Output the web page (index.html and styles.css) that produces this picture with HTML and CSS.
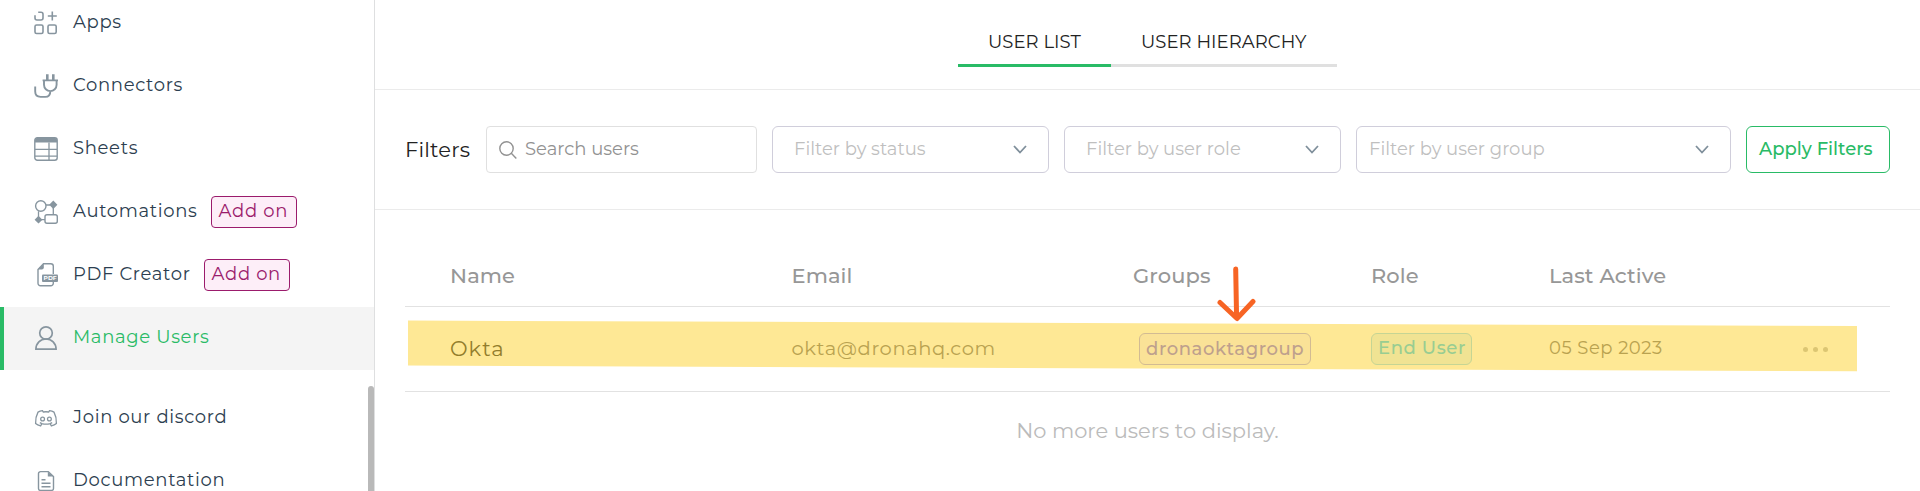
FILE: index.html
```html
<!DOCTYPE html>
<html lang="en">
<head>
<meta charset="utf-8">
<title>Manage Users</title>
<link rel="stylesheet" href="styles.css">
</head>
<body>
<div class="app">
  <nav class="sidebar">
    <a class="item">
      <svg class="icon" viewBox="0 0 24 24"><path d="M4.2 1.2H7a2 2 0 0 1 2 2V7a2 2 0 0 1-2 2H3a2 2 0 0 1-2-2V4.2M18.300.5v9M13.800 5h9"/><rect x="1" y="14" width="8" height="8.500" rx="1.600"/><rect x="14" y="14" width="8.200" height="8.500" rx="1.600"/></svg>
      <span class="label">Apps</span>
    </a>
    <a class="item">
      <svg class="icon" viewBox="0 0 24 24"><path d="M13.300.2v6M19.300.2v6" stroke-width="2.600"/><path d="M8.600 6.400H24M10 6.800v4a6.300 6.300 0 0 0 12.600 0v-4M16.300 17.200c0 3.600-2 5.700-5 5.700H6.500c-3.400 0-5.300-2-5.300-5.300v-5.200" stroke-width="1.900"/></svg>
      <span class="label">Connectors</span>
    </a>
    <a class="item">
      <svg class="icon" viewBox="0 0 24 24"><rect x=".8" y=".8" width="22.400" height="22.400" rx="2.500" stroke-width="1.400"/><path class="solid" d="M1 5.500V3a2 2 0 0 1 2-2h18a2 2 0 0 1 2 2v2.500z"/><path d="M1 12.300h22M1 19.200h22M15 5.500V23" stroke-width="1.300"/></svg>
      <span class="label">Sheets</span>
    </a>
    <a class="item">
      <svg class="icon" viewBox="0 0 24 24"><circle cx="6.800" cy="6" r="5.200" stroke-width="1.400"/><path d="M12 5h4M19.300 8v6.500M4.500 11.200V17M7 19.700h4" stroke-width="1.300"/><path class="solid" d="m19.300 .6 4.100 4.200-4.100 4.200-4.100-4.200zM4.500 15.800 8.400 19.700l-3.900 3.900L.6 19.700z"/><rect x="11" y="14.700" width="12.300" height="8.500" rx="2" stroke-width="1.400"/></svg>
      <span class="label">Automations</span>
      <span class="addon">Add on</span>
    </a>
    <a class="item">
      <svg class="icon" viewBox="0 0 24 24"><path d="M19.300 11V3.300A2.500 2.500 0 0 0 16.800.8H9.500L4 6.500v13.700A2.500 2.500 0 0 0 6.500 22.700h10.300a2.500 2.500 0 0 0 2.500-2.500V19" stroke-width="1.400"/><path class="solid" d="M9.800.8v3.700a2 2 0 0 1-2 2H4z"/><rect class="solid" x="8" y="11.500" width="16" height="7.500" rx="1"/><text class="pdf" x="9.600" y="17.400" textLength="13" lengthAdjust="spacingAndGlyphs">PDF</text></svg>
      <span class="label">PDF Creator</span>
      <span class="addon">Add on</span>
    </a>
    <a class="item active">
      <svg class="icon" viewBox="0 0 24 24"><ellipse cx="12" cy="7" rx="6.300" ry="6.200" stroke-width="1.700"/><path d="M1.900 23.200C2 17 6.300 13 12 13s10 4 10.100 10.200z" stroke-width="1.700"/></svg>
      <span class="label">Manage Users</span>
    </a>
    <a class="item spaced">
      <svg class="icon discord" viewBox="0 0 24 24"><path d="M8.500 4.600c-1.700.2-3.200.7-4.500 1.500C2.300 9.300 1.400 13 1.600 17.500c1.400 1.200 3 1.900 5 2.400l1.300-2.200c2.800.7 5.500.7 8.200 0l1.300 2.200c2-.5 3.600-1.200 5-2.400.2-4.500-.7-8.200-2.400-11.400-1.300-.8-2.800-1.300-4.500-1.500l-.8 1.400c-1.800-.3-3.700-.3-5.400 0zM5.800 16.700l2.100 1M18.200 16.700l-2.100 1"/><circle cx="8.600" cy="13" r="1.900"/><circle cx="15.400" cy="13" r="1.900"/></svg>
      <span class="label">Join our discord</span>
    </a>
    <a class="item">
      <svg class="icon" viewBox="0 0 24 24"><path d="M14.300 2.600H6.500a2 2 0 0 0-2 2v14.800a2 2 0 0 0 2 2h11a2 2 0 0 0 2-2V7.500zM7.500 10.800h4M7.500 14.300h9M7.500 17.800h9" stroke-width="1.400"/><path class="solid" d="M13.800 2.600v5h5.500z"/></svg>
      <span class="label">Documentation</span>
    </a>
    <div class="scrollbar"></div>
  </nav>

  <main class="main">
    <header class="tabs-bar">
      <div class="tab selected">USER LIST</div>
      <div class="tab">USER HIERARCHY</div>
    </header>

    <section class="filters">
      <div class="filters-title">Filters</div>
      <div class="search">
        <svg class="magnifier" viewBox="0 0 18 18"><circle cx="7.500" cy="7.500" r="6.700"/><path d="m12.300 12.300 5 5.200"/></svg>
        <span class="hint">Search users</span>
      </div>
      <div class="select">
        <span class="hint">Filter by status</span>
        <svg class="chevron" viewBox="0 0 14 9"><path d="m1 1 6 6.500L13 1"/></svg>
      </div>
      <div class="select">
        <span class="hint">Filter by user role</span>
        <svg class="chevron" viewBox="0 0 14 9"><path d="m1 1 6 6.500L13 1"/></svg>
      </div>
      <div class="select wide">
        <span class="hint">Filter by user group</span>
        <svg class="chevron" viewBox="0 0 14 9"><path d="m1 1 6 6.500L13 1"/></svg>
      </div>
      <div class="apply">Apply Filters</div>
    </section>

    <section class="users">
      <div class="row head">
        <div>Name</div>
        <div>Email</div>
        <div>Groups</div>
        <div>Role</div>
        <div>Last Active</div>
      </div>
      <div class="row user">
        <svg class="highlight" viewBox="0 0 1452 52"><path d="M3 .5 1452 6v45.200L3 45.500z"/></svg>
        <div class="name">Okta</div>
        <div class="email">okta@dronahq.com</div>
        <div><span class="tag group">dronaoktagroup</span></div>
        <div><span class="tag role">End User</span></div>
        <div class="date">05 Sep 2023</div>
        <div class="more"><i></i><i></i><i></i></div>
        <svg class="arrow" viewBox="0 0 40 58"><path d="m18.700 3 .9 49M3 36.500l17 16L36 35.500"/></svg>
      </div>
      <div class="empty">No more users to display.</div>
    </section>
  </main>
</div>
</body>
</html>
```
FILE: styles.css
```css
* { box-sizing: border-box; }

body {
  margin: 0;
  background: #fff;
  font-family: "Montserrat", "Inter", sans-serif;
  font-size: 18px;
  overflow: hidden;
}

.app { display: flex; height: 491px; }

/* Sidebar */
.sidebar {
  position: relative;
  flex: none;
  width: 375px;
  height: 491px;
  border-right: 1px solid #dedfe0;
  overflow: hidden;
  letter-spacing: .67px;
}
.item {
  display: flex;
  align-items: center;
  height: 63px;
  padding-left: 34px;
  color: #2c3e50;
}
.item:first-child { margin-top: -8px; }
.item.spaced { margin-top: 17px; }
.item.active {
  background: #f4f4f4;
  border-left: 4px solid #29bb66;
  padding-left: 30px;
  color: #29bb66;
}
.icon {
  flex: none;
  width: 24px;
  height: 24px;
  margin-top: -1px;
  fill: none;
  stroke: #87959f;
  stroke-width: 1.6;
  overflow: visible;
}
.icon .solid { fill: #87959f; stroke: none; }
.icon .pdf { fill: #fff; stroke: none; font-size: 6px; font-weight: 700; letter-spacing: 0; }
.icon.discord { stroke-width: 1.3; }
.label { margin-left: 15px; padding-bottom: 3px; line-height: 24px; white-space: nowrap; }
.addon {
  width: 86px;
  height: 32px;
  margin-left: 13px;
  margin-top: -1px;
  padding-left: 7px;
  border: 1px solid #9b1b6c;
  border-radius: 4px;
  background: #fdeef8;
  color: #9b1b6c;
  line-height: 28px;
  white-space: nowrap;
}
.scrollbar {
  position: absolute;
  right: 0;
  top: 386px;
  width: 6px;
  height: 120px;
  border-radius: 3px;
  background: #b9b9b9;
}

/* Tabs */
.main { flex: 1; min-width: 0; }
.tabs-bar {
  display: flex;
  justify-content: center;
  height: 90px;
  padding-top: 17px;
  border-bottom: 1px solid #ebebeb;
}
.tab {
  height: 50px;
  width: 226px;
  padding-left: 30px;
  border-bottom: 3px solid #e0e0e0;
  color: #222;
  line-height: 50px;
  letter-spacing: .06px;
  white-space: nowrap;
}
.tab.selected { width: 153px; border-color: #29bb66; }

/* Filters */
.filters {
  display: flex;
  align-items: center;
  height: 120px;
  padding: 0 30px;
  border-bottom: 1px solid #ebebeb;
}
.filters-title { width: 81px; font-size: 21px; color: #222; letter-spacing: .2px; }
.search, .select {
  display: flex;
  align-items: center;
  height: 47px;
  white-space: nowrap;
}
.hint { padding-bottom: 1px; }
.search {
  width: 271px;
  padding-left: 12px;
  border: 1px solid #e0e0e0;
  border-radius: 4px;
  color: #929292;
}
.magnifier { width: 18px; height: 18px; margin-right: 8px; fill: none; stroke: #929292; stroke-width: 1.4; }
.select {
  width: 277px;
  margin-left: 15px;
  padding: 0 21px;
  justify-content: space-between;
  border: 1px solid #d0cedb;
  border-radius: 6px;
  color: #bfbfbf;
}
.select.wide { width: 375px; padding: 0 21px 0 12px; }
.chevron { width: 14px; height: 9px; fill: none; stroke: #7f8f9b; stroke-width: 1.8; }
.apply {
  width: 144px;
  height: 47px;
  margin-left: 15px;
  padding-left: 12px;
  border: 1px solid #29bb66;
  border-radius: 6px;
  color: #29bb66;
  font-weight: 500;
  line-height: 44px;
  white-space: nowrap;
}

/* User table */
.users { padding: 0 30px; }
.row {
  display: grid;
  grid-template-columns: 341.5px 341.5px 238px 178px 254px 1fr;
  align-items: center;
  padding-left: 45px;
  border-bottom: 1px solid #e2e2e2;
}
.head {
  height: 97px;
  padding-top: 35px;
  color: #979797;
  font-size: 21px;
  font-weight: 500;
  letter-spacing: .1px;
}
.user { position: relative; height: 85px; }
.user > div { position: relative; white-space: nowrap; }
.highlight {
  position: absolute;
  left: 0;
  top: 13px;
  width: 1452px;
  height: 52px;
  fill: #fee895;
}
.name { color: #927d2c; font-size: 21px; letter-spacing: 1px; padding-bottom: 1px; }
.email { color: #b9a250; font-size: 19.5px; letter-spacing: .6px; padding-bottom: 2px; }
.tag { display: block; height: 32px; border: 1px solid; border-radius: 6px; }
.group {
  width: 172px;
  margin-left: 6px;
  padding-left: 6px;
  border-color: #d2bb93;
  background: #fae297;
  color: #bea08d;
  font-weight: 500;
  line-height: 30px;
  letter-spacing: .6px;
}
.role {
  width: 101px;
  padding-left: 6px;
  border-color: #c5d594;
  background: #f0e393;
  color: #98cd92;
  font-weight: 500;
  line-height: 28px;
  letter-spacing: .6px;
}
.date { color: #b9a250; letter-spacing: .5px; padding-bottom: 2px; }
.more { display: flex; gap: 5px; padding-top: 1px; }
.more i { width: 5px; height: 5px; border-radius: 50%; background: #dcc673; }
.arrow {
  position: absolute;
  left: 812px;
  top: -41px;
  width: 40px;
  height: 58px;
  fill: none;
  stroke: #f76424;
  stroke-width: 5;
  stroke-linecap: round;
  stroke-linejoin: round;
}
.empty {
  padding-top: 26px;
  text-align: center;
  color: #bbb;
  font-size: 21px;
}
```
